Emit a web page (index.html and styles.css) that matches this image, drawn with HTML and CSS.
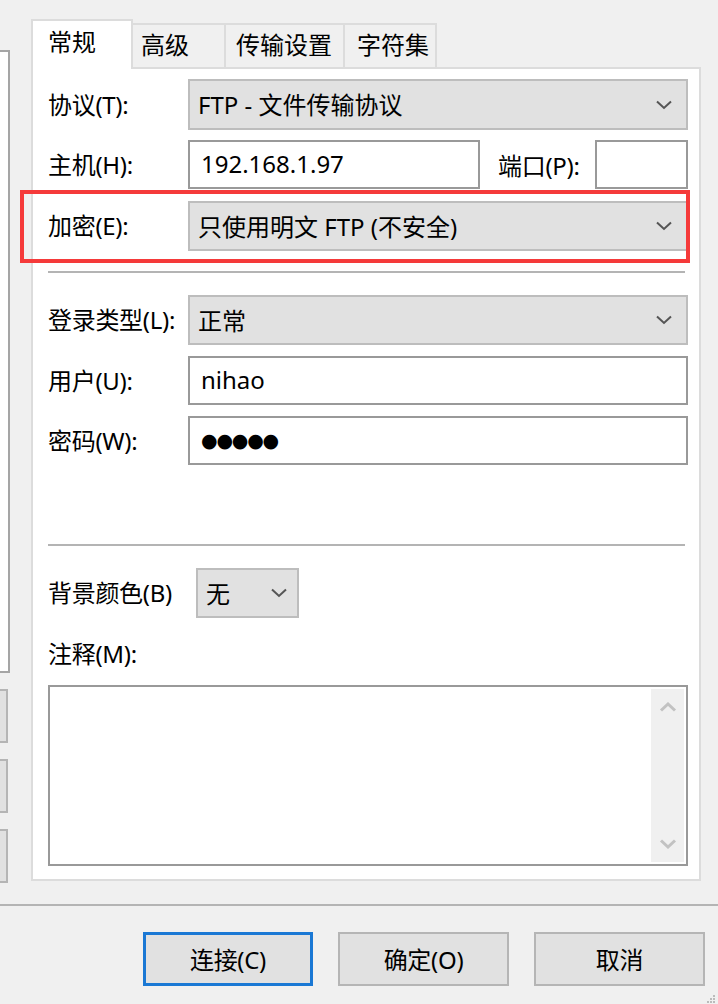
FILE: index.html
```html
<!DOCTYPE html>
<html lang="zh-CN">
<head>
    <meta charset="UTF-8">
    <title>站点管理器</title>
    <link rel="stylesheet" href="styles.css">
</head>
<body>
    <div class="window">
        <div class="main">
            <aside class="side">
                <div class="tree"></div>
                <div class="side-btn"></div>
                <div class="side-btn"></div>
                <div class="side-btn"></div>
            </aside>

            <section class="dialog">
                <div class="tabs">
                    <div class="tab active">常规</div>
                    <div class="tab tab-adv">高级</div>
                    <div class="tab tab-trans">传输设置</div>
                    <div class="tab tab-charset">字符集</div>
                </div>

                <div class="panel">
                    <div class="row row-proto">
                        <span class="label">协议(T):</span>
                        <div class="select grow">
                            <span>FTP - 文件传输协议</span>
                            <svg class="chev" width="16" height="10" viewBox="0 0 16 10"><polyline points="1,1.5 8,8 15,1.5" fill="none" stroke="#555" stroke-width="2"/></svg>
                        </div>
                    </div>

                    <div class="row row-host">
                        <span class="label">主机(H):</span>
                        <div class="input host">192.168.1.97</div>
                        <span class="port-label">端口(P):</span>
                        <div class="input port"></div>
                    </div>

                    <div class="row row-enc">
                        <span class="mark"></span>
                        <span class="label">加密(E):</span>
                        <div class="select grow">
                            <span>只使用明文 FTP (不安全)</span>
                            <svg class="chev" width="16" height="10" viewBox="0 0 16 10"><polyline points="1,1.5 8,8 15,1.5" fill="none" stroke="#555" stroke-width="2"/></svg>
                        </div>
                    </div>

                    <div class="sep"></div>

                    <div class="row row-login">
                        <span class="label">登录类型(L):</span>
                        <div class="select grow">
                            <span>正常</span>
                            <svg class="chev" width="16" height="10" viewBox="0 0 16 10"><polyline points="1,1.5 8,8 15,1.5" fill="none" stroke="#555" stroke-width="2"/></svg>
                        </div>
                    </div>

                    <div class="row row-user">
                        <span class="label">用户(U):</span>
                        <div class="input grow">nihao</div>
                    </div>

                    <div class="row row-pass">
                        <span class="label">密码(W):</span>
                        <div class="input grow"><span class="dots">●●●●●</span></div>
                    </div>

                    <div class="sep sep-2"></div>

                    <div class="row row-bg">
                        <span class="label label-bg">背景颜色(B)</span>
                        <div class="select small">
                            <span>无</span>
                            <svg class="chev" width="16" height="10" viewBox="0 0 16 10"><polyline points="1,1.5 8,8 15,1.5" fill="none" stroke="#555" stroke-width="2"/></svg>
                        </div>
                    </div>

                    <div class="notes-label">注释(M):</div>
                    <div class="notes">
                        <div class="scrollbar">
                            <svg width="18" height="10" viewBox="0 0 18 10"><polyline points="2,8.5 9,2 16,8.5" fill="none" stroke="#c2c2c2" stroke-width="3"/></svg>
                            <svg width="18" height="10" viewBox="0 0 18 10"><polyline points="2,1.5 9,8 16,1.5" fill="none" stroke="#c2c2c2" stroke-width="3"/></svg>
                        </div>
                    </div>
                </div>
            </section>
        </div>

        <div class="footer-line"></div>

        <div class="buttons">
            <div class="btn default">连接(C)</div>
            <div class="btn">确定(O)</div>
            <div class="btn">取消</div>
        </div>

        <svg class="grip" width="12" height="12" viewBox="0 0 12 12">
            <rect x="9" y="3" width="2" height="2" fill="#bbb"/>
            <rect x="6" y="6" width="2" height="2" fill="#bbb"/>
            <rect x="9" y="6" width="2" height="2" fill="#bbb"/>
            <rect x="3" y="9" width="2" height="2" fill="#bbb"/>
            <rect x="6" y="9" width="2" height="2" fill="#bbb"/>
            <rect x="9" y="9" width="2" height="2" fill="#bbb"/>
        </svg>
    </div>
</body>
</html>
```

FILE: styles.css
```css
* {
    box-sizing: border-box;
}

body {
    margin: 0;
    background: #f0f0f0;
    font-family: "Noto Sans", "Noto Sans CJK SC", sans-serif;
    font-size: 24px;
    color: #000;
}

.window {
    position: relative;
    width: 718px;
    height: 1004px;
    overflow: hidden;
}

.main {
    display: flex;
    height: 881px;
}

/* left column (site tree + buttons, cut off) */
.side {
    width: 31px;
    padding-top: 50px;
}

.tree {
    width: 10px;
    height: 623px;
    background: #fff;
    border: 2px solid #a5a5a5;
    border-left: none;
}

.side-btn {
    width: 8px;
    height: 54px;
    margin-top: 16px;
    background: #e1e1e1;
    border: 2px solid #b5b5b5;
    border-left: none;
}

.side-btn:first-of-type {
    margin-top: 14px;
}

/* tabbed dialog */
.dialog {
    width: 670px;
    padding-top: 19px;
    display: flex;
    flex-direction: column;
}

.tabs {
    display: flex;
    align-items: flex-end;
    height: 48px;
}

.tab {
    height: 44px;
    display: flex;
    align-items: center;
    padding-left: 10px;
    padding-bottom: 2px;
    background: #f0f0f0;
    border: 2px solid #dcdcdc;
    border-bottom: none;
    border-left: none;
    line-height: 1;
}

.tab.active {
    position: relative;
    z-index: 1;
    width: 102px;
    height: 50px;
    margin-bottom: -2px;
    padding-bottom: 6px;
    padding-left: 15px;
    background: #fff;
    border-left: 2px solid #dcdcdc;
}

.tab-adv {
    width: 93px;
    padding-left: 8px;
}

.tab-trans {
    width: 119px;
}

.tab-charset {
    width: 92px;
    padding-left: 12px;
}

.panel {
    flex: 1;
    background: #fff;
    border: 2px solid #dcdcdc;
    padding: 10px 11px 0 15px;
}

.row {
    display: flex;
    align-items: center;
}

.label {
    width: 140px;
    flex: none;
    line-height: 30px;
    white-space: nowrap;
    letter-spacing: -0.3px;
}

.grow {
    flex: 1;
}

.select {
    height: 51px;
    display: flex;
    align-items: center;
    justify-content: space-between;
    padding: 0 14px 2px 8px;
    background: #e1e1e1;
    border: 2px solid #bdbdbd;
    white-space: nowrap;
}

.input {
    height: 49px;
    display: flex;
    align-items: center;
    padding: 0 10px 2px 11px;
    background: #fff;
    border: 2px solid #999;
}

.chev {
    flex: none;
    margin-top: 2px;
}

.row-host {
    margin-top: 10px;
}

.host {
    width: 292px;
}

.port-label {
    margin-left: 18px;
    letter-spacing: -0.3px;
}

.port {
    width: 93px;
    margin-left: auto;
}

.row-enc {
    position: relative;
    margin-top: 12px;
}

.row-enc .select {
    height: 50px;
}

/* red highlight drawn over the screenshot */
.mark {
    position: absolute;
    top: -11px;
    bottom: -12px;
    left: -28px;
    right: -2px;
    border: 4px solid #f53a3a;
    pointer-events: none;
}

.sep {
    height: 2px;
    width: 637px;
    margin-top: 20px;
    background: #b4b4b4;
}

.row-login {
    margin-top: 22px;
}

.row-login .select,
.row-bg .select {
    height: 50px;
}

.row-user,
.row-pass {
    margin-top: 11px;
}

.dots {
    font-family: "DejaVu Sans", sans-serif;
    font-size: 19px;
    letter-spacing: -1.2px;
}

.sep-2 {
    margin-top: 79px;
}

.row-bg {
    margin-top: 22px;
}

.label-bg {
    width: 148px;
}

.select.small {
    width: 103px;
    padding-right: 10px;
}

.notes-label {
    margin-top: 22px;
    line-height: 28px;
    letter-spacing: -0.3px;
}

.notes {
    width: 640px;
    height: 181px;
    margin-top: 17px;
    background: #fff;
    border: 2px solid #999;
    display: flex;
    justify-content: flex-end;
    padding: 2px;
}

.scrollbar {
    width: 33px;
    background: #f0f0f0;
    display: flex;
    flex-direction: column;
    justify-content: space-between;
    align-items: center;
    padding: 13px 0 13px;
}

/* footer */
.footer-line {
    height: 2px;
    margin-top: 23px;
    background: #b4b4b4;
}

.buttons {
    display: flex;
    gap: 25px;
    padding-left: 143px;
    margin-top: 26px;
}

.btn {
    width: 171px;
    height: 54px;
    display: flex;
    align-items: center;
    justify-content: center;
    padding-bottom: 2px;
    background: #e1e1e1;
    border: 2px solid #b5b5b5;
    letter-spacing: -0.3px;
}

.btn.default {
    width: 170px;
    border: 3px solid #1a78d4;
}

.grip {
    position: absolute;
    right: 2px;
    bottom: 0;
}
```
